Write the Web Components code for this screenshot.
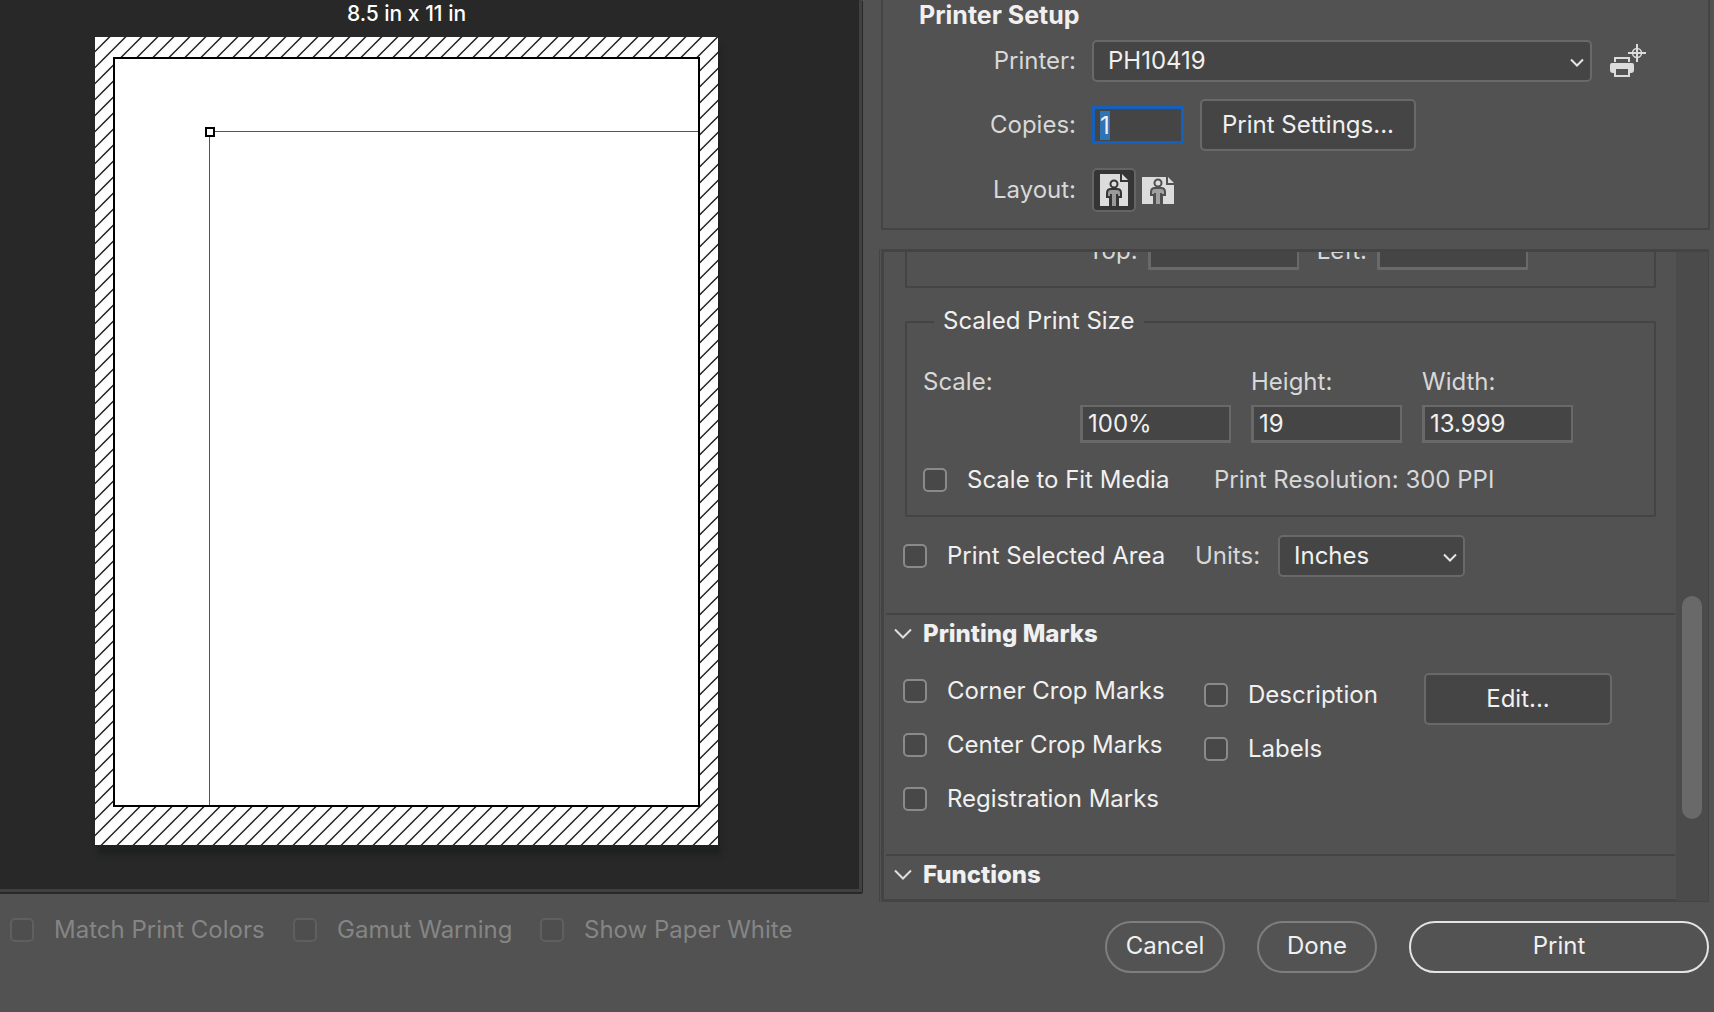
<!DOCTYPE html>
<html lang="en">
<head>
<meta charset="utf-8">
<title>Print Settings</title>
<style>
  :root {
    --bg: #525252;
    --line: #444444;
    --field: #454545;
    --edge: #696969;
    --text: #f0f0f0;
    --label: #d8d8d8;
  }
  body {
    margin: 0;
    background: var(--bg);
    color: var(--text);
    font: 24px/30px Inter, "Liberation Sans", sans-serif;
  }
</style>
</head>
<body>
<print-dialog></print-dialog>
<script>
const BASE = `
  *, *::before, *::after { box-sizing: border-box; }
  button, input, select { font: inherit; color: inherit; margin: 0; }
`;

function define(name, markup, setup) {
  const template = document.createElement('template');
  template.innerHTML = markup.replace('<style>', '<style>' + BASE);
  customElements.define(name, class extends HTMLElement {
    constructor() {
      super();
      this.attachShadow({ mode: 'open' }).append(template.content.cloneNode(true));
    }
    connectedCallback() {
      if (setup) setup(this, this.shadowRoot);
    }
  });
}

define('pd-check', `
  <style>
    :host { display: block; }
    label { display: flex; align-items: center; gap: 20px; white-space: nowrap; }
    input {
      appearance: none; flex: none; width: 24px; height: 24px;
      border: 2px solid #8a8a8a; border-radius: 5px; background: #484848;
    }
    input:checked { background: #2f74b5; }
    :host([disabled]) { color: #858585; }
    :host([disabled]) input { border-color: #5f5f5f; background: #4e4e4e; }
  </style>
  <label><input type="checkbox"><slot></slot></label>
`, (host, root) => {
  root.querySelector('input').disabled = host.hasAttribute('disabled');
});

define('pd-field', `
  <style>
    :host { display: block; }
    label { display: flex; flex-direction: column; gap: 8px; color: var(--label); white-space: nowrap; }
    input {
      width: 151px; height: 38px; padding: 0 5px; align-self: flex-end;
      border: 2px solid var(--edge); border-width: 2px 2px 3px 3px; border-radius: 0;
      background: var(--field); color: var(--text); outline: none;
    }
    :host([inline]) label { flex-direction: row; align-items: center; gap: 10px; }
    :host([copies]) label { display: grid; grid-template-columns: 157px 92px; gap: 16px; text-align: right; align-items: center; }
    :host([copies]) input { width: 92px; border: 3px solid #1560bd; }
    ::selection { background: #2f74b5; color: #f0f0f0; }
  </style>
  <label><slot></slot><input type="text"></label>
`, (host, root) => {
  const input = root.querySelector('input');
  input.value = host.getAttribute('value') || '';
  if (host.hasAttribute('copies')) {
    input.focus();
    input.select();
  }
});

define('pd-select', `
  <style>
    :host { display: block; }
    label { display: grid; grid-template-columns: var(--label-width, 83px) 1fr; align-items: center; color: var(--label); }
    .name { padding-right: 16px; }
    :host([wide]) .name { text-align: right; }
    .box { position: relative; display: block; }
    select {
      appearance: none; display: block; width: 100%; height: 42px; padding: 0 36px 0 14px;
      border: 2px solid var(--edge); border-radius: 5px; background: var(--field);
      color: var(--text); outline: none;
    }
    svg { position: absolute; right: 8px; top: 18px; pointer-events: none; }
  </style>
  <label>
    <span class="name"><slot></slot></span>
    <span class="box">
      <select></select>
      <svg width="14" height="10" viewBox="0 0 14 10" fill="none" stroke="#e6e6e6" stroke-width="2"><path d="M1 1.5 7 7.5 13 1.5"/></svg>
    </span>
  </label>
`, (host, root) => {
  root.querySelector('select').add(new Option(host.getAttribute('value')));
});

define('pd-button', `
  <style>
    :host { display: block; }
    button {
      display: block; width: 100%; height: 52px; padding: 0 20px; white-space: nowrap;
      border: 2px solid var(--edge); border-radius: 5px; background: var(--field);
    }
    :host([pill]) button { border-color: #7e7e7e; border-radius: 26px; background: #535353; padding: 0 0 3px; }
    :host([primary]) button { border-color: #e4e4e4; }
  </style>
  <button type="button"><slot></slot></button>
`);

define('pd-icon-button', `
  <style>
    :host { display: block; }
    button {
      display: flex; align-items: center; justify-content: center;
      width: 44px; height: 44px; padding: 0; border: 2px solid transparent; border-radius: 5px; background: none;
    }
    :host([compact]) button { width: 40px; height: 42px; }
    :host([pressed]) button { border-color: #646464; background: #353535; }
  </style>
  <button type="button"><slot></slot></button>
`, (host, root) => {
  root.querySelector('button').setAttribute('aria-label', host.getAttribute('name'));
});

define('pd-section', `
  <style>
    :host { display: block; }
    .rule { height: 2px; margin: 0 1px 0 2px; background: var(--line); }
    h2 { display: flex; align-items: center; gap: 11px; height: 38px; margin: 0; padding-left: 10px; font-size: 24px; font-weight: 800; }
  </style>
  <div class="rule"></div>
  <h2>
    <svg width="18" height="12" viewBox="0 0 18 12" fill="none" stroke="#dedede" stroke-width="2"><path d="M1 1.5 9 9.5 17 1.5"/></svg>
    <slot name="title"></slot>
  </h2>
  <slot></slot>
`);

define('pd-preview', `
  <style>
    :host {
      display: flex; flex-direction: column; align-items: center;
      padding: 0 46px 44px 0; background: #282828;
      border-right: 3px solid #414141; border-bottom: 3px solid #414141;
      box-shadow: 1px 1px 0 #292929, 0 2px 0 #292929;
      margin: 0 1px 2px 0;
    }
    .size { height: 37px; line-height: 28px; font-size: 21px; font-weight: 500; color: #ffffff; }
    .paper {
      display: grid; width: 623px; height: 808px; padding: 20px 18px 38px;
      background: #ffffff; box-shadow: 3px 10px 5px #202121;
    }
    .paper > * { grid-area: 1 / 1; }
    .hatch { width: calc(100% + 36px); height: calc(100% + 58px); margin: -20px -18px -38px; }
    .area { display: flex; padding: 72px 0 0 94px; border: 2px solid #000000; background: #ffffff; }
    .image { position: relative; flex: 1; border: solid #555354; border-width: 1px 0 0 1px; }
    .handle { position: absolute; left: -5px; top: -5px; width: 10px; height: 10px; border: 2px solid #000000; background: #ffffff; }
  </style>
  <div class="size"><slot></slot></div>
  <div class="paper">
    <svg class="hatch" aria-hidden="true">
      <defs>
        <pattern id="lines" width="16" height="16" patternUnits="userSpaceOnUse">
          <path d="M-2 16.5 16.5-2M12.5 18 18 12.5" stroke="#222222" stroke-width="1.5"/>
        </pattern>
      </defs>
      <rect width="100%" height="100%" fill="url(#lines)"/>
    </svg>
    <div class="area"><div class="image"><span class="handle"></span></div></div>
  </div>
`);

define('pd-setup', `
  <style>
    :host {
      display: grid; gap: 17px; padding: 0 60px 16px 36px; margin-left: 2px;
      border: 2px solid var(--line); border-top: 0; border-radius: 0 0 2px 2px;
    }
    h2 { margin: 0 0 -7px; font-size: 25px; line-height: 30px; font-weight: 700; }
    .row { display: flex; align-items: center; gap: 16px; }
    .row pd-select { flex: 1; --label-width: 173px; }
    .layout { gap: 0; }
    .layout span { width: 157px; margin-right: 16px; text-align: right; color: var(--label); }
    svg { display: block; }
  </style>
  <h2>Printer Setup</h2>
  <div class="row">
    <pd-select wide value="PH10419">Printer:</pd-select>
    <pd-icon-button compact name="Printer profile">
      <svg width="36" height="34" viewBox="0 0 36 34" fill="none">
        <path d="M5 18V14H19V18" stroke="#dcdcdc" stroke-width="2"/>
        <path d="M2 19H22Q24 19 24 21V26Q24 29 21 29H20V25H4V29H3Q0 29 0 26V21Q0 19 2 19Z" fill="#dcdcdc"/>
        <path d="M5 25V32H19V25" stroke="#dcdcdc" stroke-width="2"/>
        <path d="M27 0V18M18 9H36" stroke="#dcdcdc" stroke-width="2"/>
        <circle cx="27" cy="9" r="4.5" stroke="#dcdcdc" stroke-width="1.5"/>
      </svg>
    </pd-icon-button>
  </div>
  <div class="row">
    <pd-field copies value="1">Copies:</pd-field>
    <pd-button>Print Settings...</pd-button>
  </div>
  <div class="row layout">
    <span>Layout:</span>
    <pd-icon-button pressed name="Portrait">
      <svg width="28" height="32" viewBox="0 0 28 32">
        <path d="M0 0H20V8H28V32H0Z" fill="#dcdcdc"/><path d="M22 0 28 6H22Z" fill="#dcdcdc"/>
        <path d="M6 24V19Q6 14 11 14H17Q22 14 22 19V24H19V32H9V24Z" fill="#353535"/>
        <path d="M8 22V19Q8 16 11 16H17Q20 16 20 19V22H18V20H16V32H12V20H10V22Z" fill="#999999"/>
        <circle cx="14" cy="10" r="3.5" fill="#dcdcdc" stroke="#353535" stroke-width="2"/>
      </svg>
    </pd-icon-button>
    <pd-icon-button name="Landscape">
      <svg width="32" height="27" viewBox="0 0 32 27">
        <path d="M0 0H24V8H32V27H0Z" fill="#dcdcdc"/><path d="M26 0 32 6H26Z" fill="#dcdcdc"/>
        <path d="M8 19V15Q8 10 13 10H19Q24 10 24 15V19H21V27H11V19Z" fill="#505050"/>
        <path d="M10 17V15Q10 12 13 12H19Q22 12 22 15V17H20V16H18V27H14V16H12V17Z" fill="#a0a0a0"/>
        <circle cx="16" cy="6" r="3.5" fill="#dcdcdc" stroke="#505050" stroke-width="2"/>
      </svg>
    </pd-icon-button>
  </div>
`);

define('pd-scroller', `
  <style>
    :host { display: grid; grid-template-columns: 1fr 32px; border: solid var(--line); border-width: 0 1px 0 1px; padding-left: 1px; }
    .view { overflow: hidden; border: 3px solid var(--line); border-right: 0; }
    .track { display: flex; flex-direction: column; align-items: center; background: #4b4b4b; border-top: 3px solid var(--line); border-bottom: 1px solid var(--line); }
    .track::before { content: ""; flex: 344; }
    .thumb { flex: 223; width: 20px; border-radius: 10px; background: #696969; }
    .track::after { content: ""; flex: 82; }
  </style>
  <div class="view"><slot></slot></div>
  <div class="track"><div class="thumb"></div></div>
`);

define('pd-options', `
  <style>
    :host { display: block; }
    fieldset { min-width: 0; margin: 0 20px 0 21px; padding: 0 16px 0; border: 2px solid var(--line); border-radius: 2px; }
    .position { display: flex; gap: 18px; margin-top: -20px; padding: 0 0 16px 181px; border-top: 0; }
    .position pd-field { flex: none; }
    .size { margin-top: 18px; padding-bottom: 20px; }
    legend { margin-left: 11px; padding: 0 9px 2px; }
    .fields { display: flex; gap: 20px; padding-top: 29px; }
    .fields pd-field:first-child { width: 308px; }
    .fit { display: grid; grid-template-columns: 291px 1fr; margin-top: 22px; color: var(--label); white-space: nowrap; }
    .fit pd-check { color: var(--text); }
    .units { display: grid; grid-template-columns: 292px 270px; align-items: center; margin: 18px 0 36px; padding-left: 19px; }
    .marks { display: grid; grid-template-columns: 301px 220px 188px; align-items: start; padding: 20px 0 40px 19px; }
    .column { display: grid; gap: 24px; padding-top: 3px; }
    .column + .column { padding-top: 7px; }
    .last { padding-bottom: 5px; }
  </style>
  <fieldset class="position">
    <pd-field inline>Top:</pd-field>
    <pd-field inline>Left:</pd-field>
  </fieldset>
  <fieldset class="size">
    <legend>Scaled Print Size</legend>
    <div class="fields">
      <pd-field value="100%">Scale:</pd-field>
      <pd-field value="19">Height:</pd-field>
      <pd-field value="13.999">Width:</pd-field>
    </div>
    <div class="fit">
      <pd-check>Scale to Fit Media</pd-check>
      <span>Print Resolution: 300 PPI</span>
    </div>
  </fieldset>
  <div class="units">
    <pd-check>Print Selected Area</pd-check>
    <pd-select value="Inches">Units:</pd-select>
  </div>
  <pd-section>
    <span slot="title">Printing Marks</span>
    <div class="marks">
      <div class="column">
        <pd-check>Corner Crop Marks</pd-check>
        <pd-check>Center Crop Marks</pd-check>
        <pd-check>Registration Marks</pd-check>
      </div>
      <div class="column">
        <pd-check>Description</pd-check>
        <pd-check>Labels</pd-check>
      </div>
      <pd-button>Edit...</pd-button>
    </div>
  </pd-section>
  <pd-section class="last"><span slot="title">Functions</span></pd-section>
`);

define('print-dialog', `
  <style>
    :host { display: grid; grid-template-columns: 863fr 851fr; align-items: start; }
    .proof { display: grid; grid-template-columns: 283px 247px auto; padding: 21px 0 0 10px; }
    .right { padding: 0 4px 0 16px; }
    pd-scroller { margin: 19px 1px 0 0; }
    .actions { display: grid; grid-template-columns: 120px 120px 300px; justify-content: end; gap: 32px; padding: 19px 1px 0 0; }
  </style>
  <div class="left">
    <pd-preview>8.5 in x 11 in</pd-preview>
    <div class="proof">
      <pd-check disabled>Match Print Colors</pd-check>
      <pd-check disabled>Gamut Warning</pd-check>
      <pd-check disabled>Show Paper White</pd-check>
    </div>
  </div>
  <div class="right">
    <pd-setup></pd-setup>
    <pd-scroller><pd-options></pd-options></pd-scroller>
    <div class="actions">
      <pd-button pill>Cancel</pd-button>
      <pd-button pill>Done</pd-button>
      <pd-button pill primary>Print</pd-button>
    </div>
  </div>
`);
</script>
</body>
</html>
